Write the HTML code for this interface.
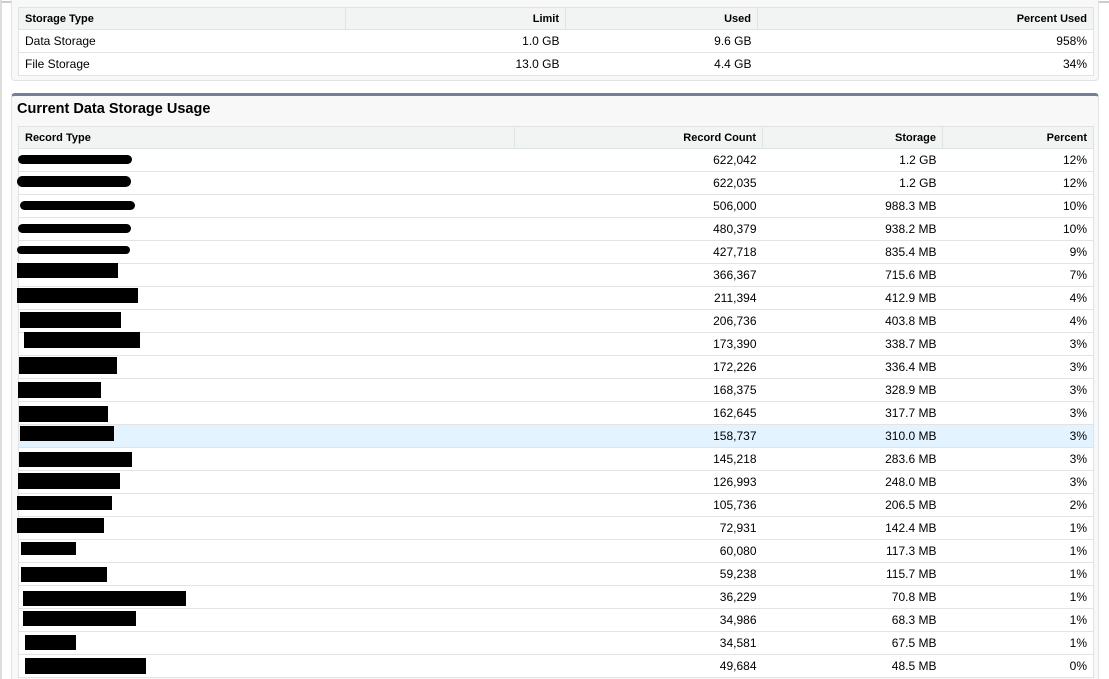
<!DOCTYPE html>
<html style="overflow:hidden;height:679px"><head><style>
body{margin:0;width:1109px;height:679px;overflow:hidden;background:#fff;font-family:"Liberation Sans",Arial,sans-serif;font-size:12px;color:#000;position:relative}
.p1{position:absolute;left:11px;top:-4px;width:1086px;height:83px;background:#f8f8f8;border:1px solid #e0e3e5;border-radius:4px}
.p2{position:absolute;left:11px;top:93px;width:1086px;height:600px;background:#f8f8f8;border:1px solid #e0e3e5;border-top:3px solid #747e96;border-radius:4px}
table{position:absolute;border-collapse:collapse;background:#fff;table-layout:fixed;box-sizing:border-box}
td,th{height:23px;padding:0 6px;border-bottom:1px solid #e3e3e3;text-align:right;white-space:nowrap;box-sizing:border-box}
th{background:#f2f3f3;font-size:11px;font-weight:bold;border:1px solid #e0e3e5;height:22px}
td:first-child,th:first-child{text-align:left}
td:first-child{border-left:1px solid #e0e3e5}
td:last-child{border-right:1px solid #e0e3e5}
.t1{left:18px;top:7px;width:1076px}
.t2{left:18px;top:126px;width:1076px}
h2{position:absolute;left:17px;top:101px;margin:0;font-size:14.5px;font-weight:bold}
.hl td{background:#e3f3ff}
.b{position:absolute;background:#000}
.r{border-radius:6px}
.edge{position:absolute;left:0;top:0;width:2px;height:679px;background:#ddd}
.topl{position:absolute;left:0;top:1px;width:1109px;height:2px;background:#ccc}
</style></head><body>
<div class="topl"></div><div class="edge"></div>
<div class="p1"></div>
<table class="t1">
<colgroup><col style="width:327px"><col style="width:220px"><col style="width:192px"><col></colgroup>
<tr><th>Storage Type</th><th>Limit</th><th>Used</th><th>Percent Used</th></tr>
<tr><td>Data Storage</td><td>1.0 GB</td><td>9.6 GB</td><td>958%</td></tr>
<tr><td>File Storage</td><td>13.0 GB</td><td>4.4 GB</td><td>34%</td></tr>
</table>
<div class="p2"></div>
<h2>Current Data Storage Usage</h2>
<table class="t2">
<colgroup><col style="width:496px"><col style="width:248px"><col style="width:180px"><col></colgroup>
<tr><th>Record Type</th><th>Record Count</th><th>Storage</th><th>Percent</th></tr>
<tr><td></td><td>622,042</td><td>1.2 GB</td><td>12%</td></tr>
<tr><td></td><td>622,035</td><td>1.2 GB</td><td>12%</td></tr>
<tr><td></td><td>506,000</td><td>988.3 MB</td><td>10%</td></tr>
<tr><td></td><td>480,379</td><td>938.2 MB</td><td>10%</td></tr>
<tr><td></td><td>427,718</td><td>835.4 MB</td><td>9%</td></tr>
<tr><td></td><td>366,367</td><td>715.6 MB</td><td>7%</td></tr>
<tr><td></td><td>211,394</td><td>412.9 MB</td><td>4%</td></tr>
<tr><td></td><td>206,736</td><td>403.8 MB</td><td>4%</td></tr>
<tr><td></td><td>173,390</td><td>338.7 MB</td><td>3%</td></tr>
<tr><td></td><td>172,226</td><td>336.4 MB</td><td>3%</td></tr>
<tr><td></td><td>168,375</td><td>328.9 MB</td><td>3%</td></tr>
<tr><td></td><td>162,645</td><td>317.7 MB</td><td>3%</td></tr>
<tr class="hl"><td></td><td>158,737</td><td>310.0 MB</td><td>3%</td></tr>
<tr><td></td><td>145,218</td><td>283.6 MB</td><td>3%</td></tr>
<tr><td></td><td>126,993</td><td>248.0 MB</td><td>3%</td></tr>
<tr><td></td><td>105,736</td><td>206.5 MB</td><td>2%</td></tr>
<tr><td></td><td>72,931</td><td>142.4 MB</td><td>1%</td></tr>
<tr><td></td><td>60,080</td><td>117.3 MB</td><td>1%</td></tr>
<tr><td></td><td>59,238</td><td>115.7 MB</td><td>1%</td></tr>
<tr><td></td><td>36,229</td><td>70.8 MB</td><td>1%</td></tr>
<tr><td></td><td>34,986</td><td>68.3 MB</td><td>1%</td></tr>
<tr><td></td><td>34,581</td><td>67.5 MB</td><td>1%</td></tr>
<tr><td></td><td>49,684</td><td>48.5 MB</td><td>0%</td></tr>
</table>
<div class="b r" style="left:18px;top:155px;width:114px;height:9px"></div>
<div class="b r" style="left:17px;top:176px;width:114px;height:11px"></div>
<div class="b r" style="left:20px;top:201px;width:115px;height:9px"></div>
<div class="b r" style="left:18px;top:224px;width:113px;height:9px"></div>
<div class="b r" style="left:17px;top:246px;width:113px;height:8px"></div>
<div class="b" style="left:17px;top:263px;width:101px;height:15px"></div>
<div class="b" style="left:17px;top:288px;width:121px;height:15px"></div>
<div class="b" style="left:20px;top:312px;width:101px;height:16px"></div>
<div class="b" style="left:24px;top:332px;width:116px;height:16px"></div>
<div class="b" style="left:19px;top:357px;width:98px;height:17px"></div>
<div class="b" style="left:18px;top:382px;width:83px;height:16px"></div>
<div class="b" style="left:19px;top:406px;width:89px;height:16px"></div>
<div class="b" style="left:20px;top:426px;width:94px;height:15px"></div>
<div class="b" style="left:19px;top:452px;width:113px;height:15px"></div>
<div class="b" style="left:18px;top:473px;width:102px;height:16px"></div>
<div class="b" style="left:17px;top:496px;width:95px;height:14px"></div>
<div class="b" style="left:17px;top:518px;width:87px;height:15px"></div>
<div class="b" style="left:21px;top:542px;width:55px;height:13px"></div>
<div class="b" style="left:21px;top:567px;width:86px;height:15px"></div>
<div class="b" style="left:23px;top:591px;width:163px;height:15px"></div>
<div class="b" style="left:23px;top:611px;width:113px;height:15px"></div>
<div class="b" style="left:25px;top:635px;width:51px;height:15px"></div>
<div class="b" style="left:25px;top:658px;width:121px;height:16px"></div>
</body></html>
